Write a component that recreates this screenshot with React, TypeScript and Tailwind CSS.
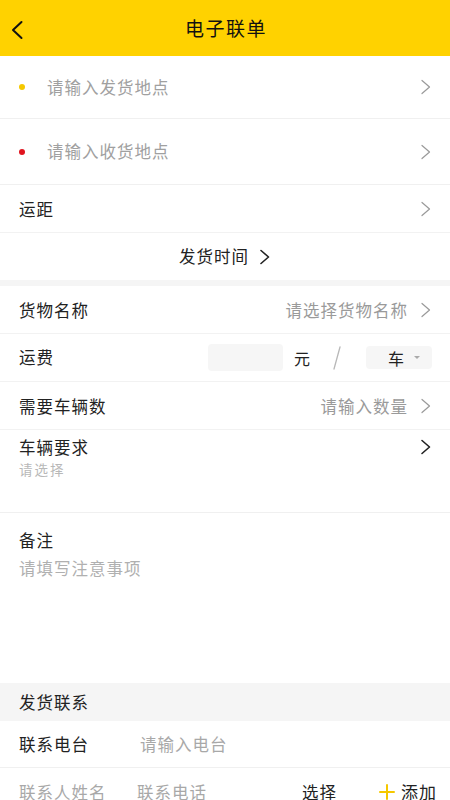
import React from 'react';

const font = { fontFamily: '"Noto Sans CJK SC", "Noto Sans", sans-serif' };

function Chevron({ dark = false }: { dark?: boolean }) {
  return (
    <svg width="12" height="16" viewBox="0 0 12 16" fill="none" className="shrink-0">
      <path
        d="M2 1.5 L9.5 8 L2 14.5"
        stroke={dark ? '#222222' : '#9a9a9a'}
        strokeWidth={dark ? 1.6 : 1.2}
        strokeLinecap="round"
        strokeLinejoin="round"
      />
    </svg>
  );
}

function Row({ label, hint }: { label: string; hint?: string }) {
  return (
    <div className="flex h-[48px] items-center border-b border-[#f2f2f2] pl-[19px] pr-[18px]">
      <span className="text-[16.5px] leading-[22px] text-[#222]">{label}</span>
      <div className="ml-auto flex items-center gap-[12px]">
        {hint && <span className="text-[16.5px] leading-[22px] text-[#9a9a9a]">{hint}</span>}
        <Chevron />
      </div>
    </div>
  );
}

export default function App() {
  return (
    <div className="w-[450px] h-[800px] overflow-hidden bg-white tracking-[1px]" style={font}>
      {/* Header */}
      <div className="relative flex h-[56px] items-center justify-center bg-[#ffd200]">
        <button className="absolute left-[10px] top-[20px]">
          <svg width="14" height="20" viewBox="0 0 14 20" fill="none">
            <path d="M11.5 2 L3 10 L11.5 18" stroke="#111" strokeWidth="2" strokeLinecap="round" strokeLinejoin="round" />
          </svg>
        </button>
        <h1 className="pl-[2px] text-[19px] tracking-[1.5px] text-[#111]">电子联单</h1>
      </div>

      {/* Addresses */}
      <div className="flex h-[63px] items-center border-b border-[#f0f0f0] pl-[19px] pr-[18px]">
        <span className="h-[6px] w-[6px] rounded-full bg-[#f5c800]" />
        <span className="ml-[22px] text-[16.5px] text-[#a0a0a0]">请输入发货地点</span>
        <div className="ml-auto"><Chevron /></div>
      </div>
      <div className="flex h-[66px] items-center border-b border-[#f0f0f0] pl-[19px] pr-[18px]">
        <span className="h-[6px] w-[6px] rounded-full bg-[#e0141e]" />
        <span className="ml-[22px] text-[16.5px] text-[#a0a0a0]">请输入收货地点</span>
        <div className="ml-auto"><Chevron /></div>
      </div>
      <Row label="运距" />
      <div className="flex h-[47px] items-center justify-center gap-[10px]">
        <span className="text-[16.5px] text-[#222]">发货时间</span>
        <Chevron dark />
      </div>
      <div className="h-[6px] bg-[#f5f5f5]" />

      {/* Cargo */}
      <Row label="货物名称" hint="请选择货物名称" />
      <div className="flex h-[48px] items-center border-b border-[#f2f2f2] pl-[19px] pr-[18px]">
        <span className="text-[16.5px] text-[#222]">运费</span>
        <div className="ml-auto flex items-center">
          <div className="h-[27px] w-[75px] rounded-[4px] bg-[#f6f6f6]" />
          <span className="ml-[11px] text-[16px] tracking-normal text-[#222]">元</span>
          <svg width="10" height="26" viewBox="0 0 10 26" className="ml-[22px]">
            <path d="M8 2 L2 24" stroke="#b8b8b8" strokeWidth="1.3" strokeLinecap="round" />
          </svg>
          <div className="ml-[24px] flex h-[23px] w-[66px] items-center justify-end gap-[10px] rounded-[4px] bg-[#f6f6f6] pr-[12px]">
            <span className="text-[16px] tracking-normal text-[#222]">车</span>
            <span className="h-0 w-0 border-x-[3px] border-t-[3px] border-x-transparent border-t-[#aaa]" />
          </div>
        </div>
      </div>
      <Row label="需要车辆数" hint="请输入数量" />
      <div className="h-[83px] border-b border-[#f0f0f0] pl-[19px] pr-[18px] pt-[5px]">
        <div className="flex h-[24px] items-center">
          <span className="text-[16.5px] text-[#222]">车辆要求</span>
          <div className="ml-auto"><Chevron dark /></div>
        </div>
        <div className="text-[13.5px] leading-[20px] tracking-[2px] text-[#b8b8b8]">请选择</div>
      </div>

      {/* Notes */}
      <div className="h-[170px] pl-[19px] pt-[15px]">
        <div className="text-[16.5px] leading-[24px] text-[#222]">备注</div>
        <div className="mt-[4px] text-[16.5px] leading-[24px] text-[#b0b0b0]">请填写注意事项</div>
      </div>

      {/* Contact */}
      <div className="flex h-[38px] items-center bg-[#f5f5f5] pl-[19px]">
        <span className="text-[16.5px] text-[#222]">发货联系</span>
      </div>
      <div className="flex h-[47px] items-center border-b border-[#f0f0f0] pl-[19px]">
        <span className="w-[121px] text-[16.5px] text-[#222]">联系电台</span>
        <span className="text-[16.5px] text-[#a8a8a8]">请输入电台</span>
      </div>
      <div className="flex h-[48px] items-center pl-[19px] pr-[13px]">
        <span className="w-[118px] text-[16.5px] text-[#a8a8a8]">联系人姓名</span>
        <span className="text-[16.5px] text-[#a8a8a8]">联系电话</span>
        <span className="ml-auto text-[16.5px] text-[#222]">选择</span>
        <div className="ml-[42px] flex items-center gap-[6px]">
          <svg width="16" height="16" viewBox="0 0 16 16">
            <path d="M8 1 V15 M1 8 H15" stroke="#f5c800" strokeWidth="2" strokeLinecap="round" />
          </svg>
          <span className="text-[17px] text-[#222]">添加</span>
        </div>
      </div>
    </div>
  );
}
